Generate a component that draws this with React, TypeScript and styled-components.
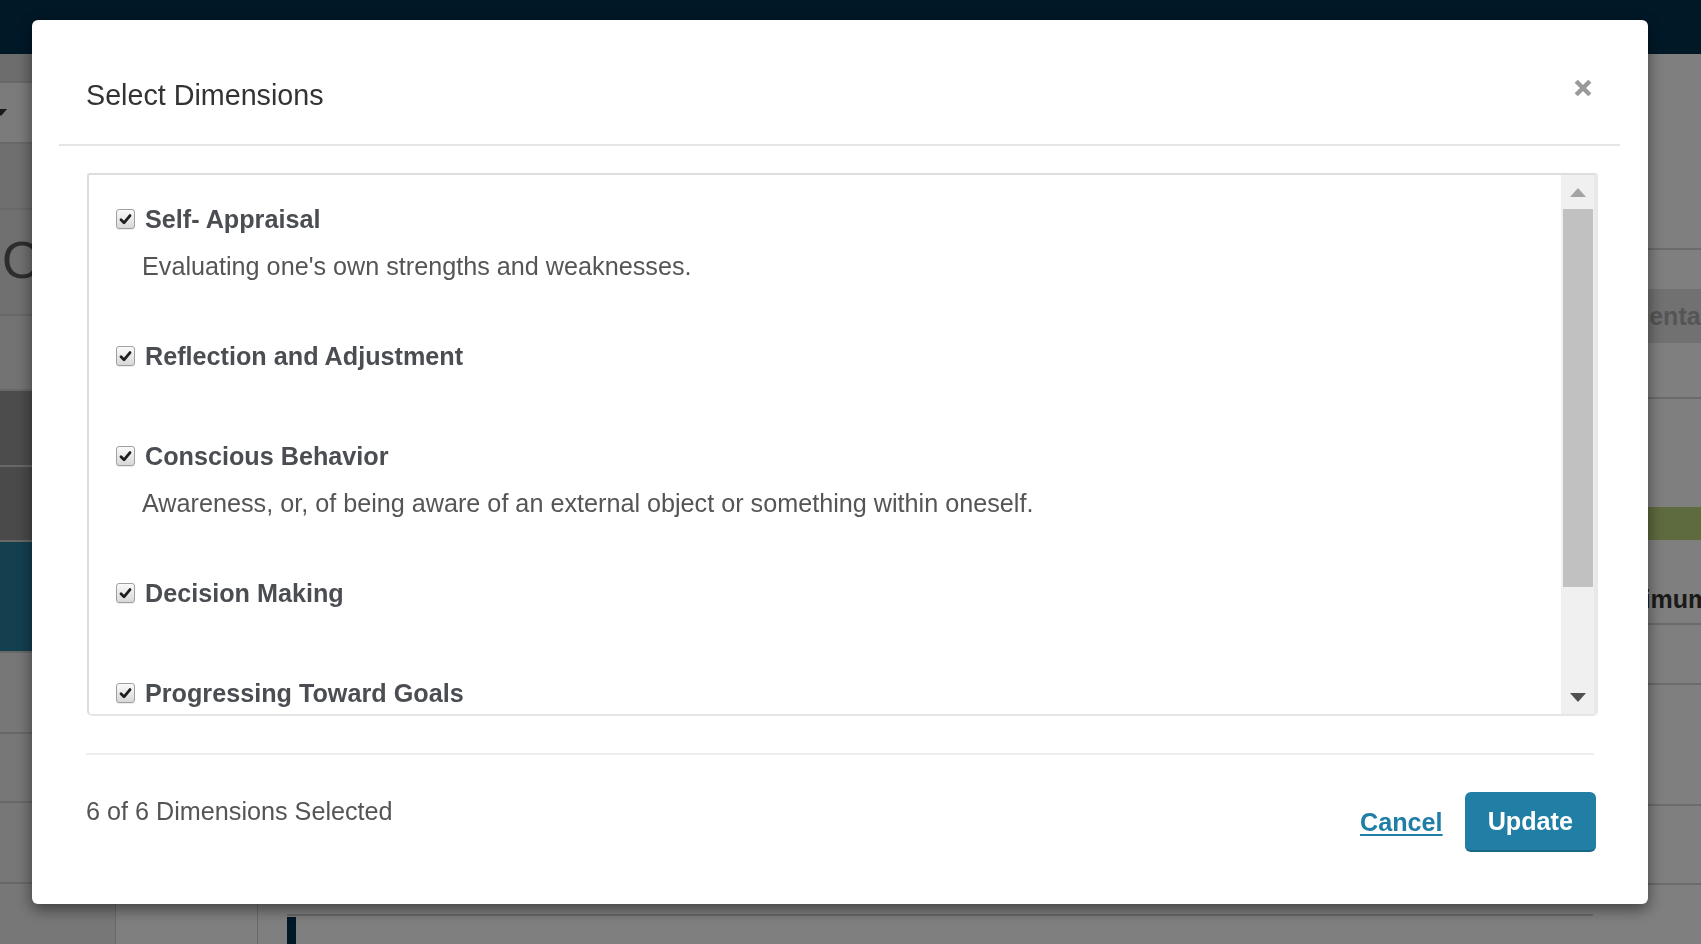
import React from "react";
import styled, { createGlobalStyle } from "styled-components";

const GlobalStyle = createGlobalStyle`
  html, body { margin: 0; padding: 0; width: 100%; height: 100%; overflow: hidden; }
  body { font-family: "Liberation Sans", Arial, sans-serif; background: #fff; }
  * { box-sizing: border-box; }
`;

/* ---------- background page ---------- */
const Page = styled.div`
  width: 1701px;
  height: 944px;
  display: flex;
  flex-direction: column;
  overflow: hidden;
  background: #fff;
`;

const TopBar = styled.div`
  height: 54px;
  flex: none;
  background: #02304f;
`;

const PageMain = styled.div`
  flex: 1;
  min-height: 0;
  display: grid;
  grid-template-columns: 116px 142px 1fr 108px;
`;

const Sidebar = styled.div`
  display: flex;
  flex-direction: column;
  border-right: 1px solid #d2d2d2;
  overflow: hidden;
`;

const SideRow = styled.div<{ $h: number; $bg: string }>`
  height: ${(p) => p.$h}px;
  flex: none;
  background: ${(p) => p.$bg};
  border-bottom: 2px solid #d0d0d0;
  display: flex;
  align-items: center;
  overflow: hidden;
`;

const Caret = styled.span`
  width: 0;
  height: 0;
  margin-left: -5px;
  border-left: 6px solid transparent;
  border-right: 6px solid transparent;
  border-top: 7px solid #333;
`;

const BigLetter = styled.span`
  font-size: 52px;
  color: #5a5a5a;
  line-height: 1;
  margin-left: 2px;
  margin-top: -4px;
`;

const SecondCol = styled.div`
  border-right: 1px solid #d2d2d2;
`;

const MainCol = styled.div`
  display: flex;
  flex-direction: column;
  justify-content: flex-end;
`;

const ChartStrip = styled.div`
  height: 30px;
  margin-left: 29px;
  border-top: 2px solid #cfcfcf;
  display: flex;
`;

const NavyBar = styled.div`
  width: 9px;
  margin-top: 1px;
  background: #02304f;
`;

const RightCol = styled.div`
  display: flex;
  flex-direction: column;
  overflow: hidden;
`;

const RightRow = styled.div<{ $h: number; $bg?: string; $line?: boolean }>`
  height: ${(p) => p.$h}px;
  flex: none;
  background: ${(p) => p.$bg || "transparent"};
  border-bottom: ${(p) => (p.$line ? "2px solid #d6d6d6" : "none")};
  display: flex;
  align-items: center;
  padding-left: 2px;
  white-space: nowrap;
`;

const CellText = styled.span<{ $muted?: boolean; $offset?: number }>`
  font-size: 25px;
  font-weight: 700;
  margin-top: ${(p) => p.$offset || 0}px;
  color: ${(p) => (p.$muted ? "#aaaaaa" : "#343434")};
`;

/* ---------- modal ---------- */
const Backdrop = styled.div`
  position: fixed;
  inset: 0;
  background: rgba(0, 0, 0, 0.5);
`;

const Modal = styled.div`
  position: fixed;
  top: 20px;
  left: 32px;
  width: 1616px;
  background: #fff;
  border-radius: 6px;
  box-shadow: 0 5px 15px rgba(0, 0, 0, 0.5);
  padding: 0 28px 0 27px;
  display: flex;
  flex-direction: column;
`;

const Header = styled.div`
  display: flex;
  align-items: flex-start;
  justify-content: space-between;
  padding: 59px 28px 33px 27px;
  border-bottom: 2px solid #e5e5e5;
`;

const Title = styled.h4`
  margin: 0;
  font-size: 28.7px;
  line-height: 32px;
  font-weight: 400;
  color: #333;
`;

const CloseButton = styled.button`
  width: 18px;
  height: 18px;
  padding: 0;
  border: 0;
  background: none;
  cursor: pointer;
  color: #9a9a9a;
  display: flex;
`;

const Body = styled.div`
  padding: 27px 22px 0 28px;
`;

const ListBox = styled.div`
  height: 543px;
  display: flex;
  border: 2px solid #dedede;
  border-right: 4px solid #e8e8e8;
  border-bottom-color: #e6e6e6;
  border-radius: 3px 3px 5px 5px;
  overflow: hidden;
`;

const List = styled.div`
  flex: 1;
  padding: 26px 0 0 27px;
  overflow: hidden;
`;

const Item = styled.div`
  min-height: 46px;
  margin-bottom: 54px;
`;

const ItemLabel = styled.label`
  display: flex;
  align-items: center;
  gap: 10px;
  height: 36px;
  font-size: 25.2px;
  font-weight: 700;
  color: #4a4d52;
  cursor: pointer;
`;

const HiddenInput = styled.input`
  display: none;
`;

const CheckBox = styled.span`
  width: 19px;
  height: 20px;
  flex: none;
  border: 1px solid #a0a0a0;
  border-radius: 3px;
  background: linear-gradient(#fafafa, #d8d8d8);
  box-shadow: 0 1px 0 rgba(0, 0, 0, 0.08);
  display: flex;
  align-items: center;
  justify-content: center;
`;

const Description = styled.p`
  margin: 11px 0 0 26px;
  font-size: 25.2px;
  line-height: 36px;
  color: #555;
`;

const ScrollBar = styled.div`
  width: 33px;
  flex: none;
  background: #f0f0f0;
  display: flex;
  flex-direction: column;
`;

const ScrollButton = styled.div`
  height: 34px;
  flex: none;
  display: flex;
  align-items: center;
  justify-content: center;
`;

const ScrollTrack = styled.div`
  flex: 1;
`;

const Thumb = styled.div`
  height: 378px;
  margin: 0 1px 0 2px;
  background: #c1c1c1;
`;

const Arrow = styled.span<{ $dir: "up" | "down" }>`
  width: 0;
  height: 0;
  border-left: 8px solid transparent;
  border-right: 8px solid transparent;
  ${(p) =>
    p.$dir === "up"
      ? "border-bottom: 9px solid #a3a3a3;"
      : "border-top: 9px solid #505050;"}
`;

const Footer = styled.div`
  margin: 37px 26px 0 27px;
  border-top: 2px solid #eeeeee;
  padding: 37px 0 52px;
  display: flex;
  align-items: flex-start;
  justify-content: space-between;
`;

const Count = styled.div`
  margin-top: 4px;
  font-size: 25.2px;
  line-height: 30px;
  color: #555;
`;

const Actions = styled.div`
  display: flex;
  align-items: center;
  gap: 22px;
  margin-right: -2px;
`;

const CancelLink = styled.a`
  font-size: 25.2px;
  font-weight: 700;
  color: #1f7ea5;
  text-decoration: underline;
  text-decoration-thickness: 2px;
  text-underline-offset: 3px;
  cursor: pointer;
`;

const UpdateButton = styled.button`
  height: 60px;
  padding: 0 23px;
  border: 0;
  border-bottom: 2px solid #1a6687;
  border-radius: 6px;
  background: #217fa5;
  color: #fff;
  font-family: "Liberation Sans", Arial, sans-serif;
  font-size: 25.2px;
  font-weight: 700;
  cursor: pointer;
`;

type Dimension = { name: string; description?: string };

const dimensions: Dimension[] = [
  { name: "Self- Appraisal", description: "Evaluating one's own strengths and weaknesses." },
  { name: "Reflection and Adjustment" },
  {
    name: "Conscious Behavior",
    description:
      "Awareness, or, of being aware of an external object or something within oneself.",
  },
  { name: "Decision Making" },
  { name: "Progressing Toward Goals" },
];

const sideRows: { h: number; bg: string; content?: "caret" | "letter" }[] = [
  { h: 29, bg: "#dadada" },
  { h: 61, bg: "#f6f6f6", content: "caret" },
  { h: 66, bg: "#dedede" },
  { h: 106, bg: "#e0e0e0", content: "letter" },
  { h: 75, bg: "#e6e6e6" },
  { h: 76, bg: "#999999" },
  { h: 75, bg: "#949494" },
  { h: 111, bg: "#267f9f" },
  { h: 81, bg: "#eeeeee" },
  { h: 69, bg: "#eeeeee" },
  { h: 81, bg: "#eeeeee" },
  { h: 80, bg: "#eeeeee" },
];

const CheckIcon = () => (
  <svg width="13" height="13" viewBox="0 0 13 13" aria-hidden="true">
    <path
      d="M2 6.8 L5 9.8 L11 2.6"
      fill="none"
      stroke="#1e1e1e"
      strokeWidth="2.8"
      strokeLinecap="round"
      strokeLinejoin="round"
    />
  </svg>
);

const CloseIcon = () => (
  <svg width="18" height="18" viewBox="0 0 18 18" aria-hidden="true">
    <path d="M2.2 2.2 L15.8 15.8 M15.8 2.2 L2.2 15.8" stroke="currentColor" strokeWidth="4.4" />
  </svg>
);

export default function App() {
  return (
    <>
      <GlobalStyle />
      <Page>
        <TopBar />
        <PageMain>
          <Sidebar>
            {sideRows.map((r, i) => (
              <SideRow key={i} $h={r.h} $bg={r.bg}>
                {r.content === "caret" && <Caret />}
                {r.content === "letter" && <BigLetter>O</BigLetter>}
              </SideRow>
            ))}
          </Sidebar>
          <SecondCol />
          <MainCol>
            <ChartStrip>
              <NavyBar />
            </ChartStrip>
          </MainCol>
          <RightCol>
            <RightRow $h={196} $line />
            <RightRow $h={39} />
            <RightRow $h={54} $bg="#e2e2e2">
              <CellText $muted>Percentage</CellText>
            </RightRow>
            <RightRow $h={56} $line />
            <RightRow $h={108} />
            <RightRow $h={33} $bg="#bcd67c" />
            <RightRow $h={85} $line>
              <CellText $offset={36}>Maximum</CellText>
            </RightRow>
            <RightRow $h={60} $line />
            <RightRow $h={121} $line />
            <RightRow $h={79} $line />
          </RightCol>
        </PageMain>
      </Page>

      <Backdrop />

      <Modal role="dialog" aria-labelledby="dlg-title">
        <Header>
          <Title id="dlg-title">Select Dimensions</Title>
          <CloseButton aria-label="Close">
            <CloseIcon />
          </CloseButton>
        </Header>

        <Body>
          <ListBox>
            <List>
              {dimensions.map((d) => (
                <Item key={d.name}>
                  <ItemLabel>
                    <HiddenInput type="checkbox" checked readOnly />
                    <CheckBox>
                      <CheckIcon />
                    </CheckBox>
                    {d.name}
                  </ItemLabel>
                  {d.description && <Description>{d.description}</Description>}
                </Item>
              ))}
            </List>
            <ScrollBar>
              <ScrollButton>
                <Arrow $dir="up" />
              </ScrollButton>
              <ScrollTrack>
                <Thumb />
              </ScrollTrack>
              <ScrollButton>
                <Arrow $dir="down" />
              </ScrollButton>
            </ScrollBar>
          </ListBox>
        </Body>

        <Footer>
          <Count>6 of 6 Dimensions Selected</Count>
          <Actions>
            <CancelLink>Cancel</CancelLink>
            <UpdateButton>Update</UpdateButton>
          </Actions>
        </Footer>
      </Modal>
    </>
  );
}
